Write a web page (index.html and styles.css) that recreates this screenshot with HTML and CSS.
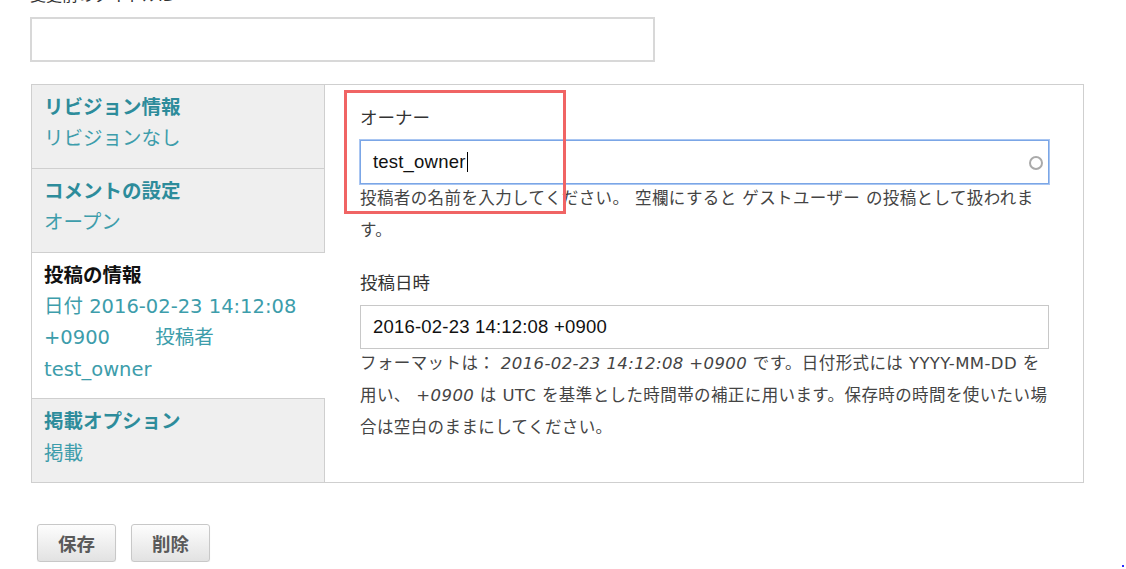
FILE: index.html
```html
<!DOCTYPE html>
<html lang="ja">
<head>
  <meta charset="UTF-8">
  <title>投稿の編集</title>
  <link rel="stylesheet" href="styles.css">
</head>
<body>
<main class="page">
  <div class="top-field">
    <label class="top-label">変更前のタイトルID</label>
    <input class="top-input" type="text">
  </div>

  <div class="tabs">
    <ul class="tab-menu">
      <li class="tab">
        <strong>リビジョン情報</strong>
        <span class="summary">リビジョンなし</span>
      </li>
      <li class="tab">
        <strong>コメントの設定</strong>
        <span class="summary">オープン</span>
      </li>
      <li class="tab active">
        <strong>投稿の情報</strong>
        <span class="summary">日付 2016-02-23 14:12:08</span>
        <span class="summary">+0900 <span class="gap">投稿者</span></span>
        <span class="summary">test_owner</span>
      </li>
      <li class="tab">
        <strong>掲載オプション</strong>
        <span class="summary">掲載</span>
      </li>
    </ul>

    <div class="tab-pane">
      <div class="form-item">
        <label>オーナー</label>
        <div class="input focused">
          <span class="value">test_owner</span><span class="caret"></span>
          <span class="throbber"></span>
        </div>
        <p class="desc">投稿者の名前を入力してください。 空欄にすると ゲストユーザー の投稿として扱われます。</p>
      </div>
      <div class="form-item">
        <label>投稿日時</label>
        <div class="input">
          <span class="value">2016-02-23 14:12:08 +0900</span>
        </div>
        <p class="desc">フォーマットは： <em>2016-02-23 14:12:08 +0900</em> です。日付形式には YYYY-MM-DD を用い、 <em>+0900</em> は UTC を基準とした時間帯の補正に用います。保存時の時間を使いたい場合は空白のままにしてください。</p>
      </div>
      <div class="highlight"></div>
    </div>
  </div>

  <div class="actions">
    <button class="btn">保存</button>
    <button class="btn">削除</button>
  </div>
</main>
<span class="dot"></span>
</body>
</html>
```

FILE: styles.css
```css
* {
  margin: 0;
  padding: 0;
  box-sizing: border-box;
}

body {
  background-color: #fff;
  font-family: "DejaVu Sans", "Noto Sans CJK JP", sans-serif;
  color: #333;
  overflow: hidden;
}

.page {
  margin-top: -15px;
  padding-left: 30px;
}

.top-label {
  display: block;
  font-size: 16px;
  line-height: 22px;
  color: #333;
}

.top-input {
  display: block;
  width: 625px;
  height: 45px;
  margin-top: 10px;
  border: 2px solid #d8d8d8;
}

.tabs {
  display: flex;
  width: 1053px;
  height: 399px;
  margin-top: 22px;
  margin-left: 1px;
  border: 1px solid #cfcfcf;
}

.tab-menu {
  list-style: none;
  display: flex;
  flex-direction: column;
  width: 293px;
  flex-shrink: 0;
  border-right: 1px solid #cfcfcf;
}

.tab {
  padding: 7px 12px 13px 12px;
  background-color: #efefef;
  border-bottom: 1px solid #cfcfcf;
  font-size: 19.5px;
  line-height: 31.4px;
}

.tab:last-child {
  flex: 1;
  border-bottom: none;
}

.tab strong {
  display: block;
  color: #2d8c9b;
}

.tab .summary {
  display: block;
  color: #3d9dab;
}

.tab.active {
  background-color: #fff;
  margin-right: -1px;
}

.tab.active strong {
  color: #111;
}

.gap {
  margin-left: 39px;
}

.tab-pane {
  position: relative;
  flex: 1;
  padding: 21px 34px 0 35px;
}

.form-item label {
  display: block;
  font-size: 17.5px;
  line-height: 24px;
  color: #333;
}

.input {
  position: relative;
  display: flex;
  align-items: center;
  height: 44px;
  margin-top: 10px;
  padding-left: 12px;
  border: 1px solid #c8c8c8;
  font-family: "Liberation Sans", Arial, sans-serif;
  font-size: 18.5px;
  letter-spacing: 0.2px;
  color: #111;
}

.input.focused {
  border-color: #7ba6e6;
  box-shadow: 0 0 0 1px #a9c6f2;
}

.caret {
  width: 1px;
  height: 20px;
  margin-left: 1px;
  background-color: #000;
}

.throbber {
  position: absolute;
  right: 5px;
  top: 15px;
  width: 14px;
  height: 14px;
  border: 2px solid #aaa;
  border-radius: 50%;
}

.desc {
  margin-top: -1px;
  font-size: 16.5px;
  letter-spacing: 0.4px;
  line-height: 32px;
  color: #444;
}

.form-item + .form-item {
  margin-top: 24px;
}

.highlight {
  position: absolute;
  left: 19px;
  top: 5px;
  width: 222px;
  height: 124px;
  border: 3px solid #f06464;
}

.actions {
  display: flex;
  gap: 15px;
  margin-top: 41px;
  margin-left: 7px;
}

.btn {
  width: 79px;
  height: 38px;
  border: 1px solid #c8c8c8;
  border-radius: 3px;
  background: linear-gradient(#fdfdfd, #e2e2e2);
  box-shadow: 0 1px 1px rgba(0, 0, 0, 0.08);
  font-family: "Noto Sans CJK JP", sans-serif;
  font-size: 18.5px;
  line-height: 36px;
  font-weight: bold;
  color: #5a5a5a;
}

.dot {
  position: absolute;
  left: 1122px;
  top: 565px;
  width: 2px;
  height: 2px;
  background-color: #2a2aff;
}
```
